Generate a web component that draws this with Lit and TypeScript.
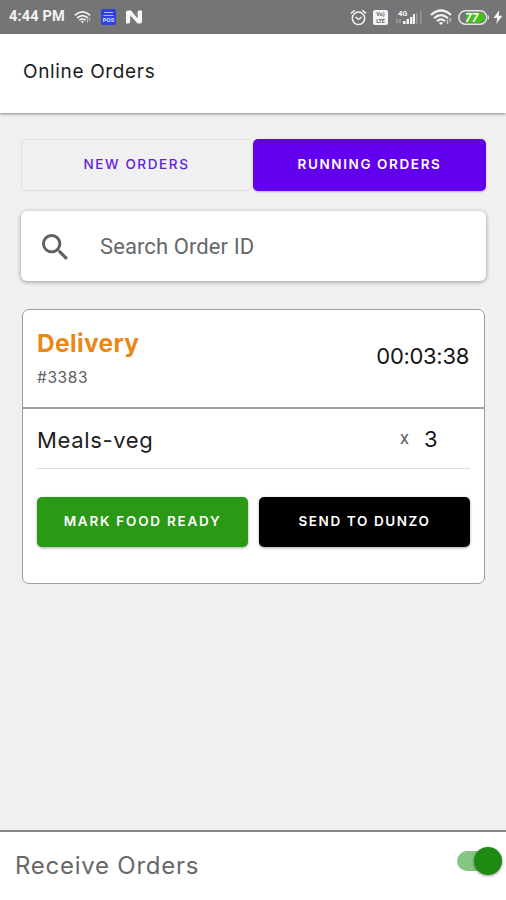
import { LitElement, html, css, svg } from "lit";
import { customElement, property } from "lit/decorators.js";

@customElement("status-bar")
class StatusBar extends LitElement {
  static styles = css`
    :host {
      display: flex;
      align-items: center;
      box-sizing: border-box;
      height: 34px;
      padding: 0 3px 0 9px;
      background: #757575;
      color: #f4f4f4;
      font: 700 14.5px/36px Roboto, sans-serif;
    }
    svg { display: block; flex: none; }
    .time { width: 65px; letter-spacing: 0.15px; white-space: nowrap; }
    .apps { display: flex; align-items: center; gap: 10px; }
    .system { display: flex; align-items: center; margin-left: auto; }
    .alarm { margin-right: 6px; }
    .volte { margin-right: 8px; }
    .signal { margin-right: 8px; }
    .system .wifi { margin-right: 6px; }
    .battery { margin-right: 3px; }
    .glyph { font-family: Roboto, sans-serif; font-weight: 700; }
  `;

  private wifi(w: number, h: number) {
    return html`<svg class="wifi" width=${w} height=${h} viewBox="0 0 22 16" fill="none" stroke="#f4f4f4" stroke-width="2.2">
      <path d="M1 6Q11-3 21 6M4 9.3Q11 3 18 9.3M7 12.2Q11 8.6 15 12.2" />
      <path d="M11 16L8.8 13.9Q11 12.3 13.2 13.9Z" fill="#f4f4f4" stroke="none" />
      <path d="M17.5 15V11M20.2 12.5V9" stroke="#c8c8c8" stroke-width="1.5" />
    </svg>`;
  }

  render() {
    return html`
      <span class="time">4:44 PM</span>
      <div class="apps">
        ${this.wifi(17, 14)}
        <svg width="15" height="16" viewBox="0 0 15 16">
          <rect width="15" height="16" rx="2" fill="#2d3fe0" />
          <path d="M3 3.5h9M2.5 6.5h10" stroke="#aeb6ff" stroke-width="1" />
          <text class="glyph" x="7.5" y="13.3" font-size="6" text-anchor="middle" fill="#dfe2ff">POS</text>
        </svg>
        <svg width="16" height="14" viewBox="0 0 16 14" fill="#f7f7f7">
          <path d="M0 2Q0 .5 2 .5h3L11.6 8.6V2Q11.6.5 13 .5h3v11.3q0 1.7-1.8 1.7h-2.7L4.2 5.2v6.6q0 1.7-1.6 1.7H0Z" />
        </svg>
      </div>
      <div class="system">
        <svg class="alarm" width="17" height="17" viewBox="0 0 17 17" fill="none" stroke="#f4f4f4" stroke-width="1.5">
          <circle cx="8.5" cy="9.3" r="6.2" />
          <path d="M1 4.4L4.7 1.2M16 4.4L12.3 1.2M5.5 8l3 2.3L11.8 8" />
        </svg>
        <svg class="volte" width="15" height="15" viewBox="0 0 15 15">
          <rect width="15" height="15" rx="2" fill="#f4f4f4" />
          <g class="glyph" font-size="5.4" text-anchor="middle" fill="#606060">
            <text x="7.5" y="6.1">Vo)</text>
            <text x="7.5" y="13.2">LTE</text>
          </g>
        </svg>
        <svg class="signal" width="26" height="16" viewBox="0 0 26 16">
          <text class="glyph" x="2" y="6.5" font-size="7.5" fill="#f4f4f4">4G</text>
          <path d="M1 10v4M4 10v4" stroke="#aaa" stroke-width="1.4" />
          <path d="M7 12h2.5v3H7zM10.5 10H13v5h-2.5zM14 8h2.5v7H14zM17 5h2v10h-2z" fill="#f4f4f4" />
          <path d="M20.8 3.5V15M24.8 1.5V15" stroke="#a0a0a0" stroke-width="1.2" />
        </svg>
        ${this.wifi(22, 16)}
        <svg class="battery" width="32" height="15" viewBox="0 0 32 15">
          <rect x=".8" y=".8" width="28" height="13.4" rx="6.7" fill="none" stroke="#e8e8e8" stroke-width="1.5" />
          <path d="M30 5q2 2.5 0 5z" fill="#e8e8e8" />
          <path d="M8 2.5h14a5 5 0 0 1 0 10H8z" fill="#43c01c" />
          <text class="glyph" x="13.8" y="12" font-size="12" font-style="italic" text-anchor="middle" fill="#fff">77</text>
        </svg>
        <svg width="10" height="14" viewBox="0 0 9 14"><path d="M5.8 0L0 8h3.7L2.8 14 9 5.8H5.2Z" fill="#f4f4f4" /></svg>
      </div>
    `;
  }
}

@customElement("action-button")
class ActionButton extends LitElement {
  @property() tone = "primary";
  static styles = css`
    :host { display: block; min-width: 0; }
    .button {
      display: block;
      box-sizing: border-box;
      width: 100%;
      height: 100%;
      margin: 0;
      padding: 0 0 3px;
      border: 0;
      border-radius: 5px;
      color: #fff;
      font: 600 13.5px/20px Inter, sans-serif;
      letter-spacing: 1.6px;
      text-align: center;
      white-space: nowrap;
      box-shadow: 0 1px 3px rgba(0, 0, 0, 0.35);
    }
    .primary { background: #6200ee; box-shadow: 0 1px 2px rgba(98, 0, 238, 0.3); }
    .success { background: #2a9a16; letter-spacing: 1.75px; }
    .dark { background: #000; }
    .outline {
      background: transparent;
      border: 1px solid #dedede;
      border-right-color: #ebebeb;
      color: #6221d8;
      font-weight: 500;
      box-shadow: none;
    }
  `;
  render() {
    return html`<button class="button ${this.tone}"><slot></slot></button>`;
  }
}

@customElement("order-card")
class OrderCard extends LitElement {
  static styles = css`
    :host {
      display: block;
      box-sizing: border-box;
      height: 275px;
      border: 1px solid #9e9e9e;
      border-radius: 7px;
      background: #fff;
      font-family: Inter, sans-serif;
    }
    .head {
      display: flex;
      justify-content: space-between;
      box-sizing: border-box;
      height: 99px;
      padding: 16px 15px 0 14px;
      border-bottom: 2px solid #a2a2a2;
    }
    .type { color: #e88818; font-weight: 700; font-size: 24.5px; line-height: 34px; letter-spacing: 0.35px; }
    .id { color: #606060; font-size: 15.5px; line-height: 20px; margin-top: 8px; letter-spacing: 0.6px; }
    .timer { color: #151515; font-size: 22px; line-height: 30px; margin-top: 15px; letter-spacing: -0.3px; }
    .item {
      display: flex;
      box-sizing: border-box;
      height: 60px;
      margin: 0 14px;
      padding-top: 15px;
      border-bottom: 1px solid #e0e0e0;
      color: #202020;
      font-size: 22px;
      line-height: 32px;
    }
    .name { flex: 1; letter-spacing: 0.65px; }
    .times { width: 24px; color: #606060; font: 18px/28px Roboto, sans-serif; }
    .count { width: 46px; line-height: 30px; color: #151515; }
    .actions {
      display: grid;
      grid-template-columns: 1fr 1fr;
      gap: 11px;
      height: 50px;
      margin: 28px 14px 0 14px;
    }
  `;
  render() {
    return html`
      <div class="head">
        <div>
          <div class="type">Delivery</div>
          <div class="id">#3383</div>
        </div>
        <div class="timer">00:03:38</div>
      </div>
      <div class="item">
        <span class="name">Meals-veg</span>
        <span class="times">x</span>
        <span class="count">3</span>
      </div>
      <div class="actions">
        <action-button tone="success">MARK FOOD READY</action-button>
        <action-button tone="dark">SEND TO DUNZO</action-button>
      </div>
    `;
  }
}

@customElement("app-root")
class AppRoot extends LitElement {
  static styles = css`
    :host {
      display: flex;
      flex-direction: column;
      height: 900px;
      overflow: hidden;
      background: #f0f0f0;
      font-family: Inter, sans-serif;
    }
    .header {
      flex: none;
      box-sizing: border-box;
      height: 79px;
      padding: 23px 23px 0;
      background: #fff;
      box-shadow: 0 1px 3px rgba(0, 0, 0, 0.45);
      color: #1c1c1c;
      font-size: 19px;
      line-height: 30px;
      letter-spacing: 0.65px;
    }
    .content { flex: 1; padding: 26px 20px 0 21px; }
    .tabs { display: grid; grid-template-columns: 231px 1fr; gap: 1px; height: 52px; }
    .search {
      display: flex;
      align-items: center;
      box-sizing: border-box;
      height: 70px;
      margin-top: 20px;
      padding: 2px 0 0 21px;
      border-radius: 6px;
      background: #fff;
      box-shadow: 0 1px 4px rgba(0, 0, 0, 0.38);
      color: #686868;
      font: 22px/30px Roboto, sans-serif;
      letter-spacing: 0.1px;
    }
    .search svg { margin-right: 32px; }
    .order { margin: 28px 1px 0; }
    .footer {
      flex: none;
      display: flex;
      justify-content: space-between;
      box-sizing: border-box;
      height: 70px;
      padding: 19px 4px 0 15px;
      border-top: 2px solid #858585;
      background: #fff;
      color: #686868;
      font-size: 24px;
      line-height: 30px;
      letter-spacing: 0.75px;
    }
    .switch { position: relative; width: 45px; height: 20px; border-radius: 10px; background: #86c683; }
    .knob {
      position: absolute;
      right: 0;
      top: -4px;
      width: 28px;
      height: 28px;
      border-radius: 50%;
      background: #1e8a12;
      box-shadow: 0 1px 3px rgba(0, 0, 0, 0.4);
    }
  `;
  render() {
    return html`
      <status-bar></status-bar>
      <div class="header">Online Orders</div>
      <div class="content">
        <div class="tabs">
          <action-button tone="outline">NEW ORDERS</action-button>
          <action-button tone="primary">RUNNING ORDERS</action-button>
        </div>
        <div class="search">
          <svg width="26" height="26" viewBox="3 3 17.5 17.5" fill="#606060">
            <path d="M15.5 14h-.79l-.28-.27A6.471 6.471 0 0 0 16 9.5 6.5 6.5 0 1 0 9.5 16c1.61 0 3.09-.59 4.23-1.57l.27.28v.79l5 4.99L20.49 19l-4.99-5zm-6 0C7.01 14 5 11.99 5 9.5S7.01 5 9.5 5 14 7.01 14 9.5 11.99 14 9.5 14z" />
          </svg>
          <span>Search Order ID</span>
        </div>
        <order-card class="order"></order-card>
      </div>
      <div class="footer">
        <span>Receive Orders</span>
        <div class="switch"><div class="knob"></div></div>
      </div>
    `;
  }
}
